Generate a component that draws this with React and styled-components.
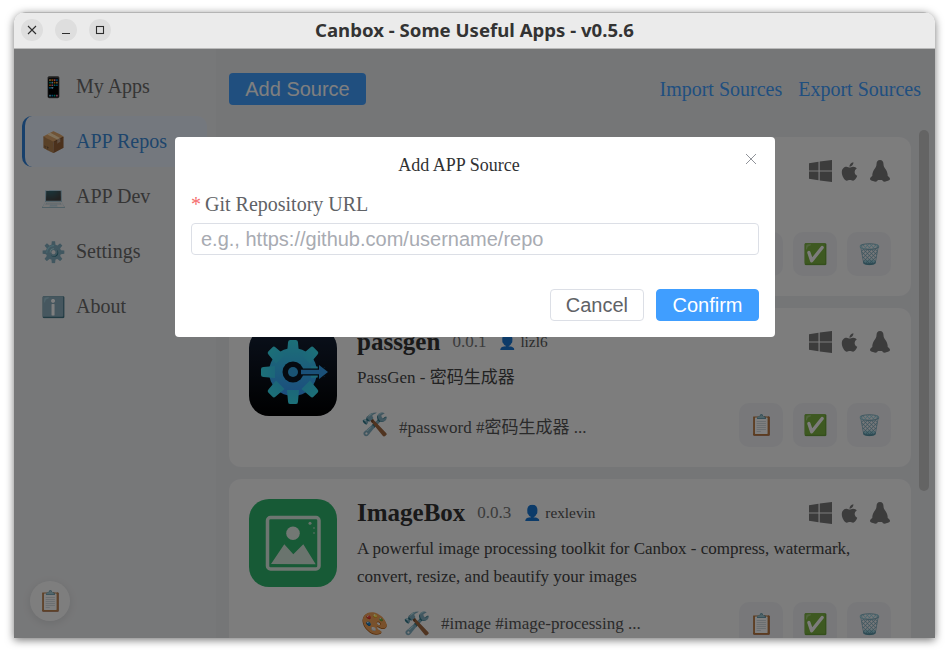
import React from 'react'
import styled, { createGlobalStyle } from 'styled-components'
import { FaApple } from 'react-icons/fa'

const SERIF = '"Liberation Serif", "Noto Sans CJK SC", serif'
const SANS = '"Liberation Sans", Arial, sans-serif'

const GlobalStyle = createGlobalStyle`
  html, body { margin: 0; background: #fff; }
  * { box-sizing: border-box; }
`

const Page = styled.div`
  width: 949px;
  height: 654px;
  padding: 12px 14px 16px 14px;
`
const Window = styled.div`
  position: relative;
  height: 100%;
  display: flex;
  flex-direction: column;
  border-radius: 12px 12px 0 0;
  overflow: hidden;
  box-shadow: 0 2px 8px rgba(0, 0, 0, 0.55);
  font-family: ${SERIF};
`
const TitleBar = styled.div`
  position: relative;
  flex: 0 0 37px;
  display: flex;
  align-items: center;
  justify-content: center;
  padding-bottom: 2px;
  background: #ebebeb;
  border-top: 1px solid #b4b4b4;
  border-bottom: 1px solid #b9b9b9;
  font: 700 18.6px "Noto Sans", sans-serif;
  color: #333;
`
const WinControls = styled.div`
  position: absolute;
  left: 7px;
  top: 6px;
  display: flex;
  gap: 12px;
`
const WinBtn = styled.span`
  width: 22px;
  height: 22px;
  border-radius: 50%;
  background: #dedede;
  display: flex;
  align-items: center;
  justify-content: center;
`
const Content = styled.div`
  position: relative;
  flex: 1;
  display: flex;
  min-height: 0;
  background: #ebecef;
`
const Sidebar = styled.nav`
  flex: 0 0 202px;
  display: flex;
  flex-direction: column;
  gap: 4px;
  padding: 12px 9px 17px 8px;
  background: #eff0f2;
`
const NavItem = styled.div`
  height: 51px;
  display: flex;
  align-items: center;
  gap: 11px;
  padding-left: ${p => (p.$active ? '16px' : '19px')};
  border-radius: 10px;
  font-size: 20px;
  color: ${p => (p.$active ? '#3d8bd9' : '#6a6a6a')};
  background: ${p => (p.$active ? '#e9f1fd' : 'transparent')};
  border-left: ${p => (p.$active ? '3px solid #2f80d8' : 'none')};
`
const NavEmoji = styled.span`
  width: 24px;
  font-size: 20px;
  text-align: center;
`
const FloatBtn = styled.div`
  margin: auto 0 0 8px;
  width: 40px;
  height: 40px;
  border-radius: 50%;
  background: #fff;
  opacity: 0.9;
  display: flex;
  align-items: center;
  justify-content: center;
  font-size: 20px;
  box-shadow: 0 2px 8px rgba(0, 0, 0, 0.1);
`
const Main = styled.main`
  position: relative;
  flex: 1;
  min-width: 0;
  display: flex;
  flex-direction: column;
  padding: 24px 0 0 13px;
`
const TopBar = styled.div`
  display: flex;
  align-items: center;
  justify-content: space-between;
  height: 32px;
  padding-right: 14px;
`
const AddBtn = styled.button`
  height: 32px;
  width: 137px;
  border: none;
  border-radius: 4px;
  background: #409eff;
  color: #fff;
  font: 20px ${SANS};
  padding: 0;
`
const Links = styled.div`
  display: flex;
  gap: 16px;
`
const LinkText = styled.a`
  color: #409eff;
  font-size: 20px;
`
const CardList = styled.div`
  display: flex;
  flex-direction: column;
  gap: 12px;
  padding-top: 32px;
  padding-right: 24px;
`
const Card = styled.article`
  flex: none;
  display: flex;
  gap: 20px;
  padding: 20px;
  border-radius: 12px;
  background: #fafafb;
`
const AppIcon = styled.div`
  flex: 0 0 88px;
  height: 88px;
  svg { display: block; }
`
const CardBody = styled.div`
  flex: 1;
  min-width: 0;
  display: flex;
  flex-direction: column;
`
const TitleRow = styled.div`
  height: 28px;
  display: flex;
  align-items: center;
  gap: 12px;
  color: #333;
`
const Name = styled.h3`
  margin: 0;
  font-size: 25px;
  font-weight: bold;
`
const Version = styled.span`
  font-size: 17px;
  color: #777;
`
const Author = styled.span`
  display: flex;
  align-items: center;
  gap: 3px;
  font-size: 15.3px;
  color: #555;
`
const AuthorEmoji = styled.span`
  font-size: 15px;
`
const OsIcons = styled.div`
  margin-left: auto;
  display: flex;
  align-items: center;
  gap: 10px;
  padding-right: 1px;
  color: #787878;
`
const WindowsSvg = styled.svg`
  margin-right: -3px;
`
const Desc = styled.p`
  margin: 8px 0 0;
  font-size: 17px;
  line-height: 28px;
  color: #444;
  max-width: 500px;
  min-height: 28px;
`
const Footer = styled.div`
  margin-top: 11px;
  display: flex;
  align-items: center;
  justify-content: space-between;
`
const Tags = styled.div`
  display: flex;
  align-items: center;
  gap: 11px;
  padding-left: 4px;
  font-size: 17px;
  color: #555;
`
const TagEmojis = styled.span`
  display: flex;
  gap: 15px;
  font-size: 22px;
`
const Actions = styled.div`
  display: flex;
  gap: 10px;
`
const ActionBtn = styled.span`
  width: 44px;
  height: 44px;
  border-radius: 10px;
  background: #f0f1f4;
  display: flex;
  align-items: center;
  justify-content: center;
  font-size: 20px;
`
const ScrollThumb = styled.div`
  position: absolute;
  right: 6px;
  top: 81px;
  width: 10px;
  height: 361px;
  border-radius: 5px;
  background: #c9c9c9;
`
const Overlay = styled.div`
  position: absolute;
  inset: 0;
  background: rgba(0, 0, 0, 0.5);
`
const Dialog = styled.div`
  position: absolute;
  left: 161px;
  top: 88px;
  width: 600px;
  height: 200px;
  background: #fff;
  border-radius: 4px;
  padding: 16px;
  color: #303133;
`
const DialogTitle = styled.div`
  text-align: center;
  padding-right: 32px;
  font-size: 18px;
  line-height: 24px;
`
const CloseBtn = styled.span`
  position: absolute;
  right: 18px;
  top: 16px;
  width: 12px;
  height: 12px;
  line-height: 0;
`
const FormLabel = styled.label`
  display: block;
  margin-top: 15px;
  font-size: 20px;
  line-height: 24px;
  color: #606266;
`
const Star = styled.span`
  color: #f56c6c;
  margin-right: 4px;
`
const Input = styled.input`
  display: block;
  width: 100%;
  height: 32px;
  margin-top: 7px;
  padding: 0 9px;
  border: 1px solid #dcdfe6;
  border-radius: 4px;
  font: 20px ${SANS};
  &::placeholder { color: #a8abb2; opacity: 1; }
`
const DialogFooter = styled.div`
  display: flex;
  justify-content: flex-end;
  gap: 12px;
  margin-top: 34px;
`
const DialogBtn = styled.button`
  height: 32px;
  padding: 0 ${p => (p.$primary ? '15.5px' : '15px')};
  border-radius: 4px;
  font: 20px ${SANS};
  border: 1px solid ${p => (p.$primary ? '#409eff' : '#dcdfe6')};
  background: ${p => (p.$primary ? '#409eff' : '#fff')};
  color: ${p => (p.$primary ? '#fff' : '#606266')};
`

const WindowsIcon = () => (
  <WindowsSvg width="23" height="22" viewBox="0 0 23 22" fill="currentColor">
    <path d="M0 3.200 9.500 1.800V10.400H0zM10.700 1.600 23 0V10.400H10.700zM0 11.600H9.500V20.200L0 18.800zM10.700 11.600H23V22L10.700 20.400z" />
  </WindowsSvg>
)

const TuxIcon = () => (
  <svg width="20" height="22" viewBox="0 0 20 22" fill="currentColor">
    <path d="M10 0c2.400 0 3.500 2 3.500 4.200 0 2.200 1 3.400 2.300 5.300 1.300 2 2 4.300 1.900 6.500.9.500 2.300 1.500 2.300 3 0 1.300-1.600 1.500-3 2-1.300.5-2.500 1-3.500.6-.7-.300-1-1-1.300-1.600H7.800c-.3.600-.6 1.300-1.300 1.600-1 .4-2.200-.1-3.500-.6-1.400-.5-3-.7-3-2 0-1.500 1.400-2.500 2.300-3-.1-2.200.6-4.500 1.900-6.500C5.500 7.600 6.500 6.400 6.500 4.200 6.500 2 7.600 0 10 0z" />
  </svg>
)

const OsRow = () => (
  <OsIcons>
    <WindowsIcon />
    <FaApple size={21} />
    <TuxIcon />
  </OsIcons>
)

const PassgenIcon = () => {
  const teeth = [0, 45, 90, 135, 180, 225, 270, 315]
  return (
    <svg width="88" height="88" viewBox="0 0 88 88">
      <defs>
        <linearGradient id="pgBg" x1="0" y1="0" x2="0" y2="1">
          <stop offset="0" stopColor="#152238" />
          <stop offset="1" stopColor="#000" />
        </linearGradient>
        <linearGradient id="pgGear" gradientUnits="userSpaceOnUse" x1="0" y1="12" x2="0" y2="76">
          <stop offset="0" stopColor="#38e0f0" />
          <stop offset="1" stopColor="#3890ff" />
        </linearGradient>
      </defs>
      <rect width="88" height="88" rx="20" fill="url(#pgBg)" />
      <g fill="url(#pgGear)">
        <circle cx="44" cy="44" r="24" />
        {teeth.map(a => (
          <path key={a} d="M38 26 39 14.500Q39 12 41 12H47Q49 12 49 14.500L50 26z" transform={`rotate(${a} 44 44)`} />
        ))}
      </g>
      <circle cx="44" cy="44" r="10.500" fill="#0a1420" />
      <circle cx="44" cy="44" r="5" fill="#34a8e8" />
      <path d="M52 41.800H70V37L79 44 70 51V46.200H52z" fill="#34a0f0" stroke="#0a1420" strokeWidth="2.500" paintOrder="stroke" />
    </svg>
  )
}

const ImageBoxIcon = () => (
  <svg width="88" height="88" viewBox="0 0 88 88">
    <rect width="88" height="88" rx="20" fill="#2fb56c" />
    <rect x="18.500" y="18.500" width="51.500" height="51.500" rx="3" fill="none" stroke="#dcece2" strokeWidth="3.500" />
    <circle cx="44" cy="34.300" r="6.800" fill="#e4f0e8" />
    <path d="M22 65 35.300 45.300 44.300 55.300 54.300 45.300 66.700 65.300z" fill="#d5e8dc" />
    <circle cx="61" cy="24.300" r="1.500" fill="#cfe6d7" />
    <circle cx="65" cy="29" r="0.800" fill="#cfe6d7" />
    <circle cx="65" cy="34" r="0.800" fill="#cfe6d7" />
  </svg>
)

const APPS = [
  { key: 'first', name: '', version: '', author: '', desc: '', emojis: [], tags: '', icon: null },
  { key: 'passgen', name: 'passgen', version: '0.0.1', author: 'lizl6', desc: 'PassGen - 密码生成器', emojis: ['🛠️'], tags: '#password #密码生成器 ...', icon: <PassgenIcon /> },
  { key: 'imagebox', name: 'ImageBox', version: '0.0.3', author: 'rexlevin', desc: 'A powerful image processing toolkit for Canbox - compress, watermark, convert, resize, and beautify your images', emojis: ['🎨', '🛠️'], tags: '#image #image-processing ...', icon: <ImageBoxIcon /> },
]

const NAV = [
  ['📱', 'My Apps'],
  ['📦', 'APP Repos', true],
  ['💻', 'APP Dev'],
  ['⚙️', 'Settings'],
  ['ℹ️', 'About'],
]

export default function App() {
  return (
    <Page>
      <GlobalStyle />
      <Window>
        <TitleBar>
          <WinControls>
            <WinBtn>
              <svg width="10" height="10" viewBox="0 0 10 10" stroke="#2e2e2e" strokeWidth="1.100"><path d="M1 1l8 8M9 1l-8 8" /></svg>
            </WinBtn>
            <WinBtn>
              <svg width="10" height="10" viewBox="0 0 10 10" stroke="#2e2e2e" strokeWidth="1.100"><path d="M1 8.500h8" /></svg>
            </WinBtn>
            <WinBtn>
              <svg width="10" height="10" viewBox="0 0 10 10" stroke="#2e2e2e" strokeWidth="1.100" fill="none"><rect x="1.500" y="1.500" width="7" height="7" /></svg>
            </WinBtn>
          </WinControls>
          Canbox - Some Useful Apps - v0.5.6
        </TitleBar>
        <Content>
          <Sidebar>
            {NAV.map(([emoji, label, active]) => (
              <NavItem key={label} $active={active}>
                <NavEmoji>{emoji}</NavEmoji>
                {label}
              </NavItem>
            ))}
            <FloatBtn>📋</FloatBtn>
          </Sidebar>
          <Main>
            <TopBar>
              <AddBtn>Add Source</AddBtn>
              <Links>
                <LinkText>Import Sources</LinkText>
                <LinkText>Export Sources</LinkText>
              </Links>
            </TopBar>
            <CardList>
              {APPS.map(app => (
                <Card key={app.key}>
                  <AppIcon>{app.icon}</AppIcon>
                  <CardBody>
                    <TitleRow>
                      <Name>{app.name}</Name>
                      <Version>{app.version}</Version>
                      {app.author && <Author><AuthorEmoji>👤</AuthorEmoji>{app.author}</Author>}
                      <OsRow />
                    </TitleRow>
                    <Desc>{app.desc}</Desc>
                    <Footer>
                      <Tags>
                        <TagEmojis>
                          {app.emojis.map(e => <span key={e}>{e}</span>)}
                        </TagEmojis>
                        <span>{app.tags}</span>
                      </Tags>
                      <Actions>
                        <ActionBtn>📋</ActionBtn>
                        <ActionBtn>✅</ActionBtn>
                        <ActionBtn>🗑️</ActionBtn>
                      </Actions>
                    </Footer>
                  </CardBody>
                </Card>
              ))}
            </CardList>
            <ScrollThumb />
          </Main>
          <Overlay />
          <Dialog>
            <DialogTitle>Add APP Source</DialogTitle>
            <CloseBtn>
              <svg width="12" height="12" viewBox="0 0 12 12" stroke="#909399" strokeWidth="1"><path d="M1 1l10 10M11 1L1 11" /></svg>
            </CloseBtn>
            <FormLabel><Star>*</Star>Git Repository URL</FormLabel>
            <Input placeholder="e.g., https://github.com/username/repo" />
            <DialogFooter>
              <DialogBtn>Cancel</DialogBtn>
              <DialogBtn $primary>Confirm</DialogBtn>
            </DialogFooter>
          </Dialog>
        </Content>
      </Window>
    </Page>
  )
}
